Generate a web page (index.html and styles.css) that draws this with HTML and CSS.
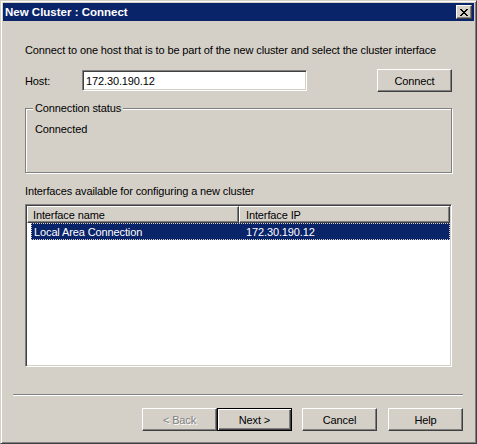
FILE: index.html
```html
<!DOCTYPE html>
<html>
<head>
<meta charset="utf-8">
<title>New Cluster : Connect</title>
<link rel="stylesheet" href="styles.css">
</head>
<body>
<div class="window">
  <div class="titlebar">
    <span class="title">New Cluster : Connect</span>
    <button class="close" aria-label="Close">
      <svg width="8" height="7" viewBox="0 0 8 7" shape-rendering="crispEdges">
        <path d="M0 0h2v1h1v1h2v-1h1v-1h2v1h-1v1h-1v1h-1v1h1v1h1v1h1v1h-2v-1h-1v-1h-2v1h-1v1h-2v-1h1v-1h1v-1h1v-1h-1v-1h-1v-1h-1z" fill="#000"/>
      </svg>
    </button>
  </div>
  <div class="content">
    <div class="intro">Connect to one host that is to be part of the new cluster and select the cluster interface</div>
    <div class="host-row">
      <span class="host-label">Host:</span>
      <div class="input">172.30.190.12</div>
      <button class="btn connect">Connect</button>
    </div>
    <div class="group">
      <span class="group-title">Connection status</span>
      <div class="status">Connected</div>
    </div>
    <div class="list-label">Interfaces available for configuring a new cluster</div>
    <div class="list">
      <div class="list-head">
        <div class="col-head first">Interface name</div>
        <div class="col-head second">Interface IP</div>
      </div>
      <div class="row selected">
        <span class="cell first">Local Area Connection</span>
        <span class="cell second">172.30.190.12</span>
      </div>
    </div>
  </div>
  <div class="footer">
    <div class="separator"></div>
    <div class="buttons">
      <div class="nav-pair">
        <button class="btn disabled">&lt; Back</button>
        <button class="btn default">Next &gt;</button>
      </div>
      <button class="btn">Cancel</button>
      <button class="btn help">Help</button>
    </div>
  </div>
</div>
</body>
</html>
```
FILE: styles.css
```css
html, body {
  margin: 0;
  padding: 0;
  background: #d4d0c8;
}
body {
  font-family: "Liberation Sans", Arial, sans-serif;
  font-size: 11px;
  line-height: 14px;
  letter-spacing: -0.12px;
  color: #000;
}
.window {
  width: 477px;
  height: 444px;
  box-sizing: border-box;
  border: 1px solid;
  border-color: #d4d0c8 #404040 #404040 #d4d0c8;
  box-shadow: inset 1px 1px 0 #fff, inset -1px -1px 0 #808080;
  padding: 2px 2px 0 2px;
  background: #d4d0c8;
  display: flex;
  flex-direction: column;
}
.titlebar {
  height: 18px;
  background: #0a246a;
  display: flex;
  align-items: center;
  justify-content: space-between;
  padding: 0 2px 0 2px;
}
.title {
  color: #fff;
  font-weight: bold;
  font-size: 11.5px;
  letter-spacing: 0;
}
.close {
  width: 16px;
  height: 14px;
  padding: 0;
  margin: 0;
  background: #d4d0c8;
  border: 1px solid;
  border-color: #fff #404040 #404040 #fff;
  box-shadow: inset -1px -1px 0 #808080;
  display: flex;
  align-items: center;
  justify-content: center;
  box-sizing: border-box;
}
.close svg { display: block; }
.content {
  padding: 0 22px 0 22px;
  display: flex;
  flex-direction: column;
}
.intro {
  margin-top: 22px;
  white-space: nowrap;
}
.host-row {
  margin-top: 12px;
  height: 23px;
  display: flex;
  align-items: center;
}
.host-label {
  width: 57px;
}
.input {
  width: 225px;
  height: 21px;
  box-sizing: border-box;
  background: #fff;
  border: 1px solid;
  border-color: #808080 #fff #fff #808080;
  box-shadow: inset 1px 1px 0 #404040, inset -1px -1px 0 #d4d0c8;
  padding: 3px 0 0 3px;
}
.btn {
  font-family: inherit;
  font-size: 11px;
  line-height: 14px;
  letter-spacing: -0.12px;
  color: #000;
  width: 75px;
  height: 23px;
  box-sizing: border-box;
  background: #d4d0c8;
  border: 1px solid;
  border-color: #fff #404040 #404040 #fff;
  box-shadow: inset -1px -1px 0 #808080;
  padding: 0;
  margin: 0;
}
.connect {
  margin-left: auto;
}
.btn.default {
  border: 1px solid #000;
  box-shadow: inset 1px 1px 0 #fff, inset -1px -1px 0 #404040, inset -2px -2px 0 #808080;
}
.btn.disabled {
  color: #808080;
  text-shadow: 1px 1px 0 #fff;
}
.group {
  position: relative;
  margin-top: 16px;
  height: 65px;
  box-sizing: border-box;
  border: 1px solid #808080;
  box-shadow: inset 1px 1px 0 #fff, 1px 1px 0 #fff;
  padding: 13px 0 0 9px;
}
.group-title {
  position: absolute;
  top: -8px;
  left: 7px;
  padding: 0 2px;
  background: #d4d0c8;
}
.list-label {
  margin-top: 11px;
}
.list {
  margin-top: 6px;
  height: 163px;
  box-sizing: border-box;
  background: #fff;
  border: 1px solid;
  border-color: #808080 #fff #fff #808080;
  box-shadow: inset 1px 1px 0 #404040, inset -1px -1px 0 #d4d0c8;
  padding: 1px;
}
.list-head {
  display: grid;
  grid-template-columns: 212px 1fr;
  height: 17px;
}
.col-head {
  box-sizing: border-box;
  background: #d4d0c8;
  border: 1px solid;
  border-color: #fff #404040 #404040 #fff;
  box-shadow: inset -1px -1px 0 #808080;
  padding: 1px 0 0 5px;
  white-space: nowrap;
}
.col-head.second {
  padding-left: 6px;
}
.row {
  margin-left: 4px;
  height: 17px;
  box-sizing: border-box;
  display: grid;
  grid-template-columns: 208px 1fr;
  align-items: center;
}
.row.selected {
  background: #0a246a;
  color: #fff;
  outline: 1px dotted #d4d0c8;
  outline-offset: -1px;
}
.cell.first { padding-left: 3px; }
.cell.second { padding-left: 7px; }
.footer {
  padding: 0 11px 0 10px;
  display: flex;
  flex-direction: column;
}
.separator {
  margin-top: 27px;
  border-top: 1px solid #808080;
  border-bottom: 1px solid #fff;
  height: 0;
}
.buttons {
  margin-top: 12px;
  display: flex;
  justify-content: flex-end;
  gap: 11px;
}
.nav-pair {
  display: flex;
  margin-right: -1px;
}
```
